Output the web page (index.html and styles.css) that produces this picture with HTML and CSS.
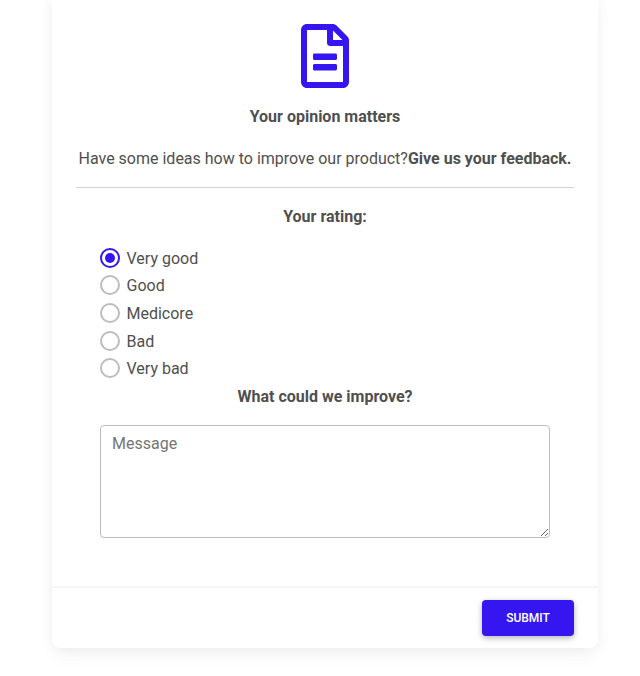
FILE: index.html
```html
<!DOCTYPE html>
<html lang="en">
<head>
<meta charset="utf-8">
<title>Feedback</title>
<link rel="stylesheet" href="styles.css">
</head>
<body>
<main class="card">
  <div class="card-body">
    <div class="intro">
      <svg class="file-icon" viewBox="0 0 384 512" aria-hidden="true"><path fill="currentColor" d="M288 248v28c0 6.600-5.400 12-12 12H108c-6.600 0-12-5.400-12-12v-28c0-6.600 5.400-12 12-12h168c6.600 0 12 5.400 12 12zm-12 72H108c-6.600 0-12 5.400-12 12v28c0 6.600 5.400 12 12 12h168c6.600 0 12-5.400 12-12v-28c0-6.600-5.400-12-12-12zm108-188.100V464c0 26.500-21.500 48-48 48H48c-26.500 0-48-21.500-48-48V48C0 21.500 21.500 0 48 0h204.100C264.800 0 277 5.100 286 14.100L369.900 98c9 8.900 14.100 21.200 14.100 33.900zm-128-80V128h76.100L256 51.900zM336 464V176H232c-13.300 0-24-10.700-24-24V48H48v416h288z"/></svg>
      <p class="title"><strong>Your opinion matters</strong></p>
      <p class="lead">Have some ideas how to improve our product?<strong>Give us your feedback.</strong></p>
    </div>
    <hr class="divider">
    <form class="form" id="feedback">
      <p class="heading"><strong>Your rating:</strong></p>
      <label class="option"><input type="radio" name="rating" checked><span>Very good</span></label>
      <label class="option"><input type="radio" name="rating"><span>Good</span></label>
      <label class="option"><input type="radio" name="rating"><span>Medicore</span></label>
      <label class="option"><input type="radio" name="rating"><span>Bad</span></label>
      <label class="option"><input type="radio" name="rating"><span>Very bad</span></label>
      <p class="heading"><strong>What could we improve?</strong></p>
      <textarea class="message" rows="4" placeholder="Message"></textarea>
    </form>
  </div>
  <footer class="card-footer"><button class="submit" type="submit" form="feedback">Submit</button></footer>
</main>
</body>
</html>
```
FILE: styles.css
```css
* { box-sizing: border-box; }

body {
  margin: 0;
  height: 676px;
  overflow: hidden;
  background: #fff;
  color: #4f4f4f;
  font: 400 16px/1.6 Roboto, sans-serif;
}

p { margin: 0 0 16px; }
strong { font-weight: 700; }

.card {
  width: 546px;
  height: 656px;
  margin: -8px 0 0 52px;
  display: flex;
  flex-direction: column;
  background: #fff;
  border-radius: 8px;
  box-shadow: 0 2px 15px -3px rgba(0, 0, 0, .07), 0 10px 20px -2px rgba(0, 0, 0, .04);
}

.card-body { flex: 1; padding: 32px 24px 0; }
.intro { text-align: center; }

.file-icon {
  display: block;
  width: 48px;
  height: 64px;
  margin: 0 auto 16px;
  color: #3616f0;
}

.lead { white-space: nowrap; }

.divider {
  height: 1px;
  margin: 16px 0;
  border: 0;
  background: #d3d3d3;
}

.form { padding: 0 24px; }
.heading { text-align: center; }

.option {
  display: flex;
  align-items: center;
  gap: 6.500px;
  height: 25.600px;
  margin-bottom: 2px;
}

.option input {
  appearance: none;
  display: grid;
  place-items: center;
  width: 20px;
  height: 20px;
  margin: 0 0 1.400px;
  border: 2px solid #bdbdbd;
  border-radius: 50%;
}

.option input:checked { border-color: #3616f0; }

.option input:checked::after {
  content: "";
  width: 10px;
  height: 10px;
  border-radius: 50%;
  background: #3616f0;
}

.message {
  display: block;
  width: 100%;
  height: 113px;
  padding: 5px 11px;
  border: 1px solid #bdbdbd;
  border-radius: 4px;
  font: inherit;
  resize: vertical;
}

.message::placeholder { color: #757575; }

.card-footer {
  display: flex;
  justify-content: flex-end;
  height: 62px;
  padding: 12px 24px;
  border-top: 2px solid #f5f5f5;
}

.submit {
  width: 92px;
  height: 36px;
  padding: 0;
  border: 0;
  border-radius: 4px;
  background: #3616f0;
  color: #fff;
  font: 500 12px/18px Roboto, sans-serif;
  text-transform: uppercase;
  box-shadow: 0 2px 5px rgba(0, 0, 0, .2), 0 2px 10px rgba(0, 0, 0, .1);
}
```
